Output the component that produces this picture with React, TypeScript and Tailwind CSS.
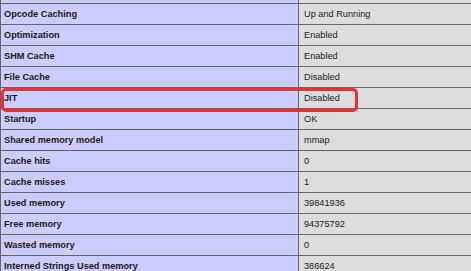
const rows: [string, string][] = [
  ['Opcode Caching', 'Up and Running'],
  ['Optimization', 'Enabled'],
  ['SHM Cache', 'Enabled'],
  ['File Cache', 'Disabled'],
  ['JIT', 'Disabled'],
  ['Startup', 'OK'],
  ['Shared memory model', 'mmap'],
  ['Cache hits', '0'],
  ['Cache misses', '1'],
  ['Used memory', '39841936'],
  ['Free memory', '94375792'],
  ['Wasted memory', '0'],
  ['Interned Strings Used memory', '386624'],
]

export default function App() {
  return (
    <div className="relative w-[471px] h-[271px] overflow-hidden bg-white font-['Liberation_Sans',Arial,sans-serif] text-[9.2px] text-[#1a1a1a]">
      {/* tail of the row above */}
      <div className="flex h-[4px] border-l border-b border-[#666]">
        <div className="w-[298px] shrink-0 bg-[#ccf] border-r border-[#666]" />
        <div className="flex-1 bg-[#ddd]" />
      </div>
      {rows.map(([k, v]) => (
        <div key={k} className="flex h-[21px] border-l border-b border-[#666]">
          <div className="w-[298px] shrink-0 bg-[#ccf] border-r border-[#666] pl-[3px] font-bold leading-[20px] whitespace-nowrap">
            {k}
          </div>
          <div className="flex-1 bg-[#ddd] pl-[5px] leading-[20px] whitespace-nowrap">{v}</div>
        </div>
      ))}
      {/* highlight around the JIT row */}
      <div className="absolute left-[1px] top-[88px] w-[357px] h-[24px] rounded-[5px] border-[3px] border-[#ef2f2f]" />
    </div>
  )
}
